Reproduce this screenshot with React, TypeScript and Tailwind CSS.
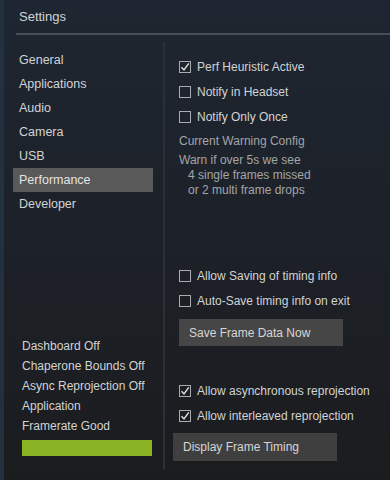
import React from "react";

const Check = ({ checked }: { checked?: boolean }) => (
  <div className="w-[12px] h-[12px] border border-[#a9abae] flex items-center justify-center shrink-0">
    {checked && (
      <svg width="10" height="10" viewBox="0 0 10 10">
        <path d="M1.5 5.2 L4 8 L8.8 1.3" fill="none" stroke="#e2e2e2" strokeWidth="1.4" />
      </svg>
    )}
  </div>
);

const Row = ({ label, checked }: { label: string; checked?: boolean }) => (
  <div className="h-[25px] flex items-center gap-[6px]">
    <Check checked={checked} />
    <span>{label}</span>
  </div>
);

export default function App() {
  const nav = ["General", "Applications", "Audio", "Camera", "USB", "Performance", "Developer"];
  return (
    <div
      className="w-[390px] h-[480px] overflow-hidden flex flex-col text-[12px] text-[#d2d3d4] bg-[linear-gradient(180deg,#1e2631_0%,#1d222a_40%,#1b1c1e_100%)] relative"
      style={{ fontFamily: '"Liberation Sans", Arial, sans-serif' }}
    >
      <div className="absolute left-0 top-0 bottom-0 w-[4px] bg-[#23303d]" />
      <div className="h-[35px] ml-[16px] border-b-2 border-[#464d57] flex items-center pl-[3px] text-[13px] text-[#cfd3d8] shrink-0">
        Settings
      </div>
      <div className="flex-1 flex pt-[7px] pb-[10px]">
        <div className="w-[165px] shrink-0 border-r-2 border-[#2c3036] flex flex-col pt-[6px] pb-[14px]">
          {nav.map((n) => (
            <div
              key={n}
              className={`ml-[13px] w-[140px] h-[24px] flex items-center pl-[6px] text-[12.5px] ${
                n === "Performance" ? "bg-[#595959] text-[#e4e4e4]" : ""
              }`}
            >
              {n}
            </div>
          ))}
          <div className="mt-auto pl-[22px] flex flex-col">
            {["Dashboard Off", "Chaperone Bounds Off", "Async Reprojection Off", "Application", "Framerate Good"].map(
              (t) => (
                <div key={t} className="h-[20px] flex items-center">
                  {t}
                </div>
              )
            )}
            <div className="mt-[4px] w-[130px] h-[16px] bg-[#8ab423]" />
          </div>
        </div>
        <div className="flex-1 flex flex-col pl-[14px] pt-[12px]">
          <Row label="Perf Heuristic Active" checked />
          <Row label="Notify in Headset" />
          <Row label="Notify Only Once" />
          <div className="h-[24px] flex items-center text-[#a3a5a8]">Current Warning Config</div>
          <div className="text-[#a3a5a8] leading-[15px]">
            <div>Warn if over 5s we see</div>
            <div className="pl-[9px]">4 single frames missed</div>
            <div className="pl-[9px]">or 2 multi frame drops</div>
          </div>
          <div className="mt-[65px]">
            <Row label="Allow Saving of timing info" />
            <Row label="Auto-Save timing info on exit" />
          </div>
          <div className="mt-[6px] w-[164px] h-[27px] bg-[#464646] flex items-center pl-[10px] text-[#d6d6d6]">
            Save Frame Data Now
          </div>
          <div className="mt-[32px]">
            <Row label="Allow asynchronous reprojection" checked />
            <Row label="Allow interleaved reprojection" checked />
          </div>
          <div className="mt-[5px] -ml-[6px] w-[164px] h-[28px] bg-[#3f3f3f] flex items-center pl-[10px] text-[#d6d6d6]">
            Display Frame Timing
          </div>
        </div>
      </div>
    </div>
  );
}
